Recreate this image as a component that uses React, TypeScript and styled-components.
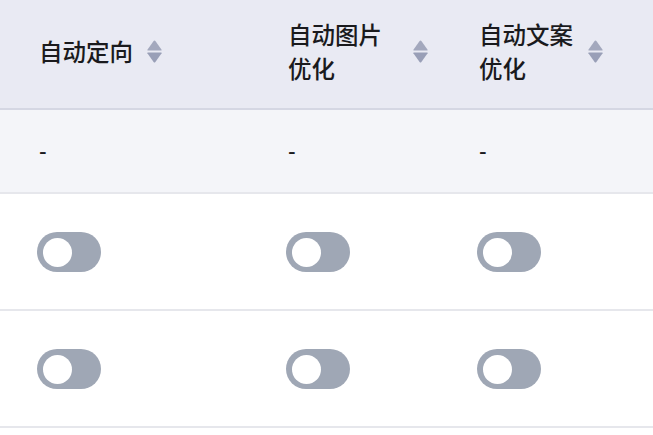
import React from "react";
import styled, { createGlobalStyle } from "styled-components";

const Global = createGlobalStyle`
  html, body { margin: 0; padding: 0; background: #ffffff; }
  body {
    font-family: "Noto Sans CJK SC", "Noto Sans", sans-serif;
    color: #1d1d20;
    -webkit-font-smoothing: antialiased;
  }
`;

const Table = styled.div`
  width: 653px;
  height: 435px;
  overflow: hidden;
  background: #ffffff;
`;

const Row = styled.div<{ $variant: "head" | "empty" | "body"; $h: number }>`
  box-sizing: border-box;
  display: grid;
  grid-template-columns: 249px 191px 213px;
  height: ${(p) => p.$h}px;
  background: ${(p) =>
    p.$variant === "head" ? "#e9eaf3" : p.$variant === "empty" ? "#f4f5f9" : "#ffffff"};
  border-bottom: 2px solid
    ${(p) => (p.$variant === "head" ? "#d5d7e3" : "#e6e7ec")};
`;

const Cell = styled.div<{ $dy?: number }>`
  display: flex;
  align-items: center;
  padding-left: 39px;
  ${(p) => (p.$dy ? `padding-bottom: ${p.$dy}px;` : "")}
`;

const HeadInner = styled.div`
  display: flex;
  align-items: center;
  gap: 10px;
`;

const Label = styled.div<{ $w: number }>`
  width: ${(p) => p.$w}px;
  font-size: 23.5px;
  line-height: 34px;
  font-weight: 500;
  color: #1a1a1d;
`;

const SortIcon = styled.svg`
  width: 15px;
  height: 23px;
  flex: none;
  margin-top: 1px;
`;

const Dash = styled.span`
  font-size: 23px;
  line-height: 1;
  color: #1c1c1f;
  font-family: "Liberation Sans", sans-serif;
`;

const Switch = styled.button<{ $on?: boolean }>`
  position: relative;
  width: 64px;
  height: 40px;
  margin-left: -2px;
  margin-top: 1px;
  padding: 0;
  border: none;
  border-radius: 20px;
  background: ${(p) => (p.$on ? "#3370ff" : "#9fa7b5")};
  cursor: pointer;
`;

const Knob = styled.span<{ $on?: boolean }>`
  position: absolute;
  top: 5.5px;
  left: ${(p) => (p.$on ? "30px" : "5.5px")};
  width: 29px;
  height: 29px;
  border-radius: 50%;
  background: #ffffff;
`;

const Sort = () => (
  <SortIcon viewBox="0 0 15 23">
    <path d="M7.5 0.5 Q8 0.5 8.4 1 L14.6 9.8 Q14.9 10.5 14.2 10.5 H0.8 Q0.1 10.5 0.4 9.8 L6.6 1 Q7 0.5 7.5 0.5 Z" fill="#a3a8bd" />
    <path d="M7.5 22.5 Q8 22.5 8.4 22 L14.6 13.2 Q14.9 12.5 14.2 12.5 H0.8 Q0.1 12.5 0.4 13.2 L6.6 22 Q7 22.5 7.5 22.5 Z" fill="#999fb7" />
  </SortIcon>
);

const headers = [
  { label: "自动定向", w: 98 },
  { label: "自动图片优化", w: 115 },
  { label: "自动文案优化", w: 99 },
];

export default function App() {
  return (
    <>
      <Global />
      <Table>
        <Row $variant="head" $h={110}>
          {headers.map((h) => (
            <Cell key={h.label} $dy={7}>
              <HeadInner>
                <Label $w={h.w}>{h.label}</Label>
                <Sort />
              </HeadInner>
            </Cell>
          ))}
        </Row>
        <Row $variant="empty" $h={84}>
          {headers.map((h) => (
            <Cell key={h.label}>
              <Dash>-</Dash>
            </Cell>
          ))}
        </Row>
        {[0, 1].map((r) => (
          <Row key={r} $variant="body" $h={117}>
            {headers.map((h) => (
              <Cell key={h.label}>
                <Switch type="button" aria-label={h.label}>
                  <Knob />
                </Switch>
              </Cell>
            ))}
          </Row>
        ))}
      </Table>
    </>
  );
}
